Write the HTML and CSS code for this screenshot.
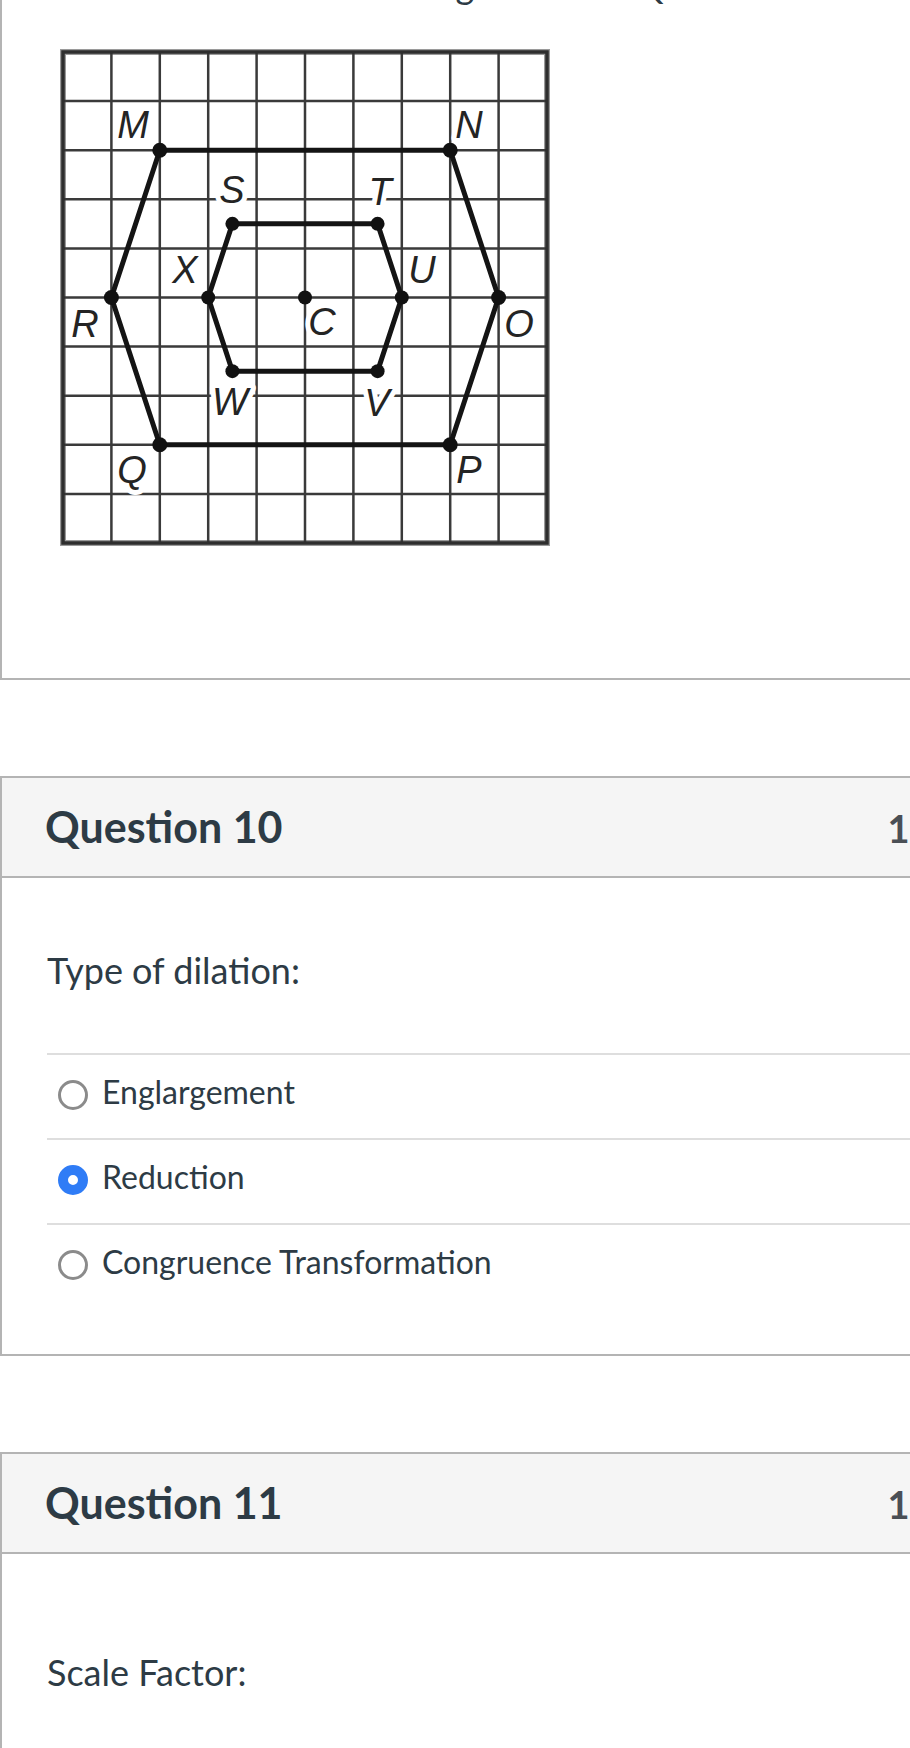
FILE: index.html
```html
<!DOCTYPE html>
<html lang="en">
<head>
<meta charset="utf-8">
<title>Quiz</title>
<link rel="stylesheet" href="styles.css">
</head>
<body>
<main class="quiz">
  <section class="card card--cont">
    <p class="q-text q-text--cut">Name the dilation of hexagon MNOPQR.</p>
    <svg class="figure" width="500" height="507" viewBox="0 0 500 507" xmlns="http://www.w3.org/2000/svg">
      <rect x="8" y="8" width="484" height="491" fill="#fff"/>
      <rect x="8" y="8" width="484" height="491" fill="none" stroke="#9a9a9a" stroke-width="6"/>
      <path class="grid" d="M56.4 8V499M104.8 8V499M153.2 8V499M201.6 8V499M250 8V499M298.4 8V499M346.8 8V499M395.2 8V499M443.6 8V499M8 57.1H492M8 106.2H492M8 155.3H492M8 204.4H492M8 253.5H492M8 302.6H492M8 351.7H492M8 400.8H492M8 449.9H492"/>
      <rect x="8" y="8" width="484" height="491" fill="none" stroke="#2e2e2e" stroke-width="3.5"/>
      <g class="labels">
        <text x="78" y="94">M</text>
        <text x="414" y="94">N</text>
        <text x="177" y="159">S</text>
        <text x="325" y="161">T</text>
        <text x="130" y="239">X</text>
        <text x="367" y="239">U</text>
        <text x="30" y="293">R</text>
        <text x="267" y="291">C</text>
        <text x="464" y="293">O</text>
        <text x="175" y="371">W</text>
        <text x="322" y="372">V</text>
        <text x="77" y="439">Q</text>
        <text x="414" y="439">P</text>
      </g>
      <polygon class="hex" points="104.8,106.2 395.2,106.2 443.6,253.5 395.2,400.8 104.8,400.8 56.4,253.5"/>
      <polygon class="hex" points="177.4,179.85 322.6,179.85 346.8,253.5 322.6,327.15 177.4,327.15 153.2,253.5"/>
      <g class="dots">
        <circle cx="104.8" cy="106.2" r="7.5"/>
        <circle cx="395.2" cy="106.2" r="7.5"/>
        <circle cx="443.6" cy="253.5" r="7.5"/>
        <circle cx="395.2" cy="400.8" r="7.5"/>
        <circle cx="104.8" cy="400.8" r="7.5"/>
        <circle cx="56.4" cy="253.5" r="7.5"/>
        <circle cx="177.4" cy="179.85" r="7"/>
        <circle cx="322.6" cy="179.85" r="7"/>
        <circle cx="346.8" cy="253.5" r="7"/>
        <circle cx="322.6" cy="327.15" r="7"/>
        <circle cx="177.4" cy="327.15" r="7"/>
        <circle cx="153.2" cy="253.5" r="7"/>
        <circle cx="250" cy="253.5" r="7"/>
      </g>
    </svg>
  </section>

  <section class="card">
    <header class="card-head">
      <h2 class="q-title">Question 10</h2>
      <span class="q-pts">1 pts</span>
    </header>
    <div class="card-body">
      <p class="q-text">Type of dilation:</p>
      <ul class="answers">
        <li class="answer"><span class="radio"></span><span class="answer-label">Englargement</span></li>
        <li class="answer"><span class="radio radio--checked"></span><span class="answer-label">Reduction</span></li>
        <li class="answer"><span class="radio"></span><span class="answer-label">Congruence Transformation</span></li>
      </ul>
    </div>
  </section>

  <section class="card">
    <header class="card-head">
      <h2 class="q-title">Question 11</h2>
      <span class="q-pts">1 pts</span>
    </header>
    <div class="card-body card-body--tall">
      <p class="q-text">Scale Factor:</p>
    </div>
  </section>
</main>
</body>
</html>
```

FILE: styles.css
```css
html {
  overflow: hidden;
  background: #fff;
}

body {
  margin: 0;
  font-family: Lato, "Noto Sans", "Liberation Sans", sans-serif;
  color: #2d3b45;
}

.quiz {
  width: 1018px;
}

.card {
  border: 2px solid #b4b4b4;
  background: #fff;
}

.card + .card {
  margin-top: 96px;
}

.card--cont {
  border-top: none;
  padding: 0 0 127px 0;
}

.q-text {
  margin: 0;
  font-size: 36px;
  line-height: 48px;
}

.q-text--cut {
  margin: -39px 0 0 47px;
}

.figure {
  display: block;
  margin: 35.4px 0 0 53px;
}

.figure .grid {
  fill: none;
  stroke: #3a3a3a;
  stroke-width: 2.5;
}

.figure .labels text {
  font-family: "Liberation Sans", Arial, sans-serif;
  font-style: italic;
  font-size: 38px;
  fill: #242424;
  text-anchor: middle;
  stroke: #fff;
  stroke-width: 10px;
  stroke-linejoin: round;
  paint-order: stroke;
}

.figure .hex {
  fill: none;
  stroke: #141414;
  stroke-width: 5;
  stroke-linejoin: round;
}

.figure .dots circle {
  fill: #111;
}

.card-head {
  display: flex;
  justify-content: space-between;
  align-items: baseline;
  padding: 23px 45px 23px 43px;
  background: #f5f5f5;
  border-bottom: 2px solid #b4b4b4;
}

.q-title {
  margin: 0;
  font-size: 43px;
  line-height: 52px;
  font-weight: 700;
}

.q-pts {
  font-size: 38px;
  font-weight: 700;
  color: #4a4f55;
}

.card-body {
  padding: 68px 0 46px 45px;
}

.card-body--tall {
  padding-top: 94px;
  padding-bottom: 240px;
}

.answers {
  list-style: none;
  margin: 59px 0 0 0;
  padding: 0;
}

.answer {
  display: flex;
  align-items: flex-start;
  padding: 18px 0 27px 11px;
  border-top: 2px solid #dedede;
}

.radio {
  box-sizing: border-box;
  flex: none;
  width: 30px;
  height: 30px;
  margin-top: 7px;
  margin-right: 14px;
  border: 3px solid #8b8b8b;
  border-radius: 50%;
  background: #fff;
}

.radio--checked {
  border: 10px solid #2f7cf6;
}

.answer-label {
  font-size: 32px;
  line-height: 38px;
}
```
